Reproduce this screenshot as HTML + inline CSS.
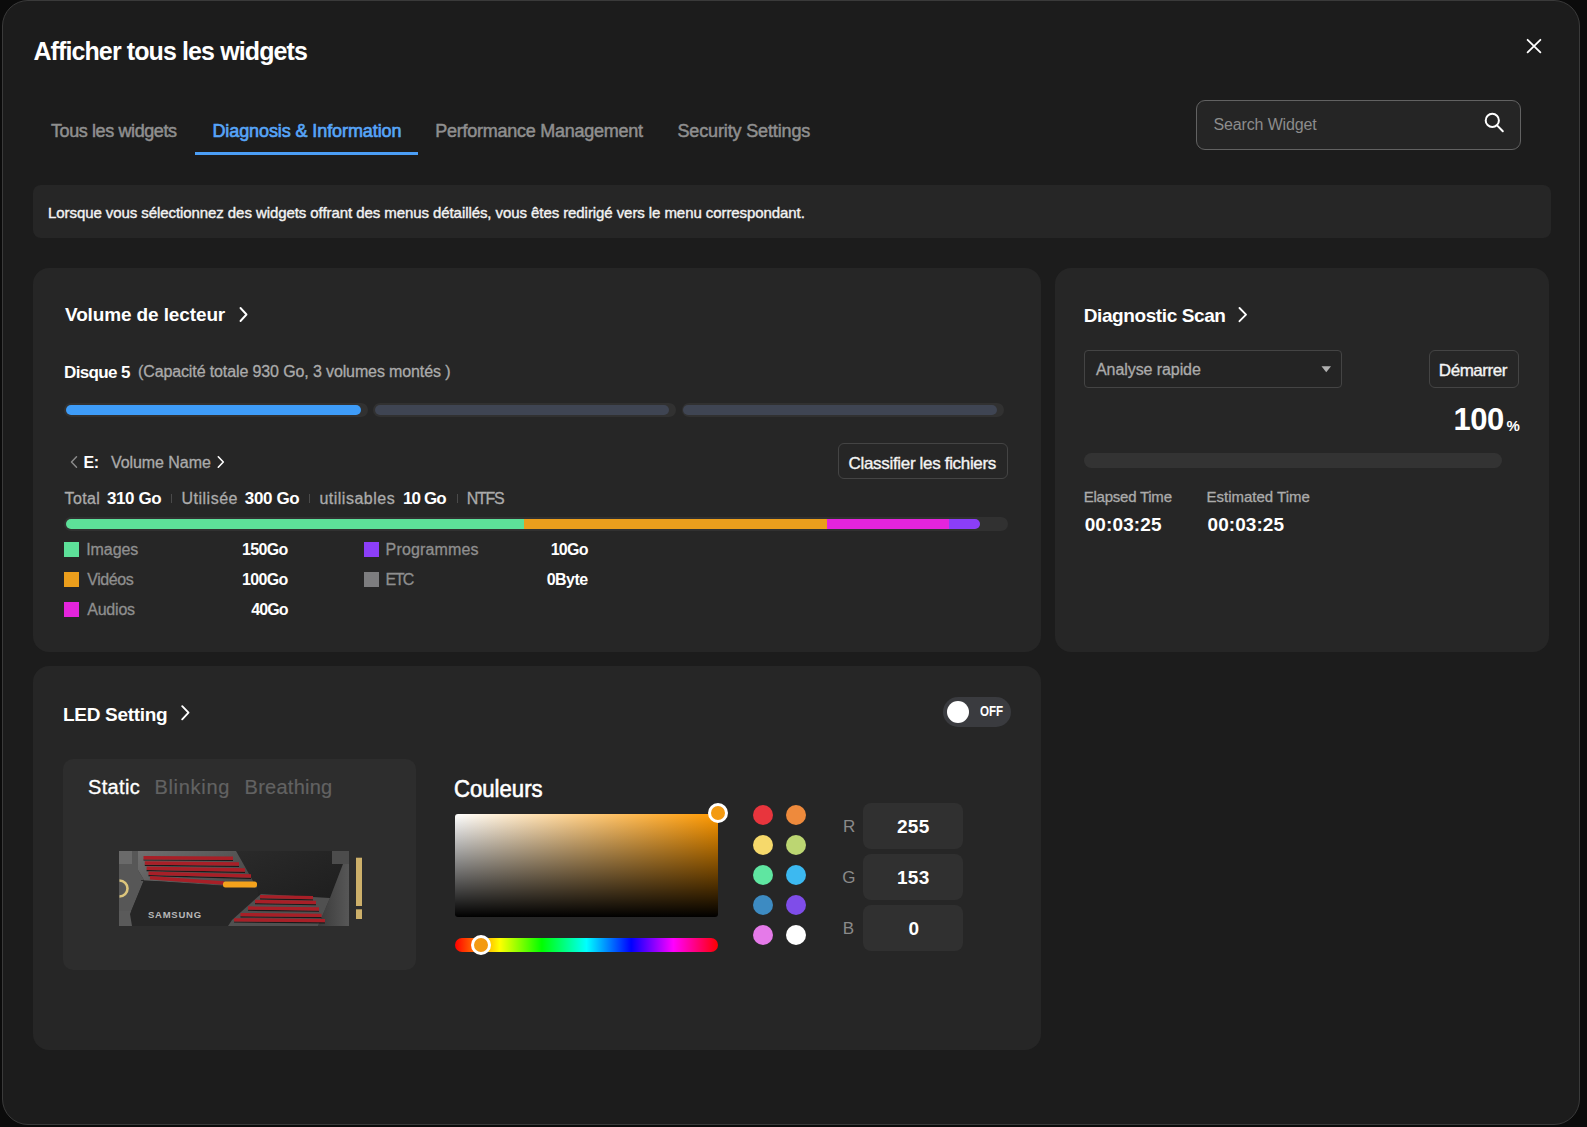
<!DOCTYPE html>
<html><head><meta charset="utf-8">
<style>
html,body{margin:0;padding:0;}
body{width:1587px;height:1127px;background:#0b0b0b;position:relative;overflow:hidden;font-family:"Liberation Sans",sans-serif;}
.a{position:absolute;box-sizing:border-box;}
.t{position:absolute;white-space:nowrap;font-family:"Liberation Sans",sans-serif;}
.modal{left:2px;top:0;width:1578px;height:1125px;background:#1c1c1c;border:1px solid #3a3a3a;border-radius:26px;}
.card{background:#262626;border-radius:16px;}
.trk{background:#313131;border-radius:7px;}
.fill{border-radius:5px;}
.sep{width:1px;background:#4a4a4a;}
.sq{width:15px;height:15px;}
.sw{width:20px;height:20px;border-radius:50%;}
.rgb{left:863px;width:100px;height:46px;background:#303030;border-radius:8px;}
svg{position:absolute;overflow:visible;}
</style></head><body>
<div class="a modal"></div>

<!-- close X -->
<svg style="left:0;top:0" width="1587" height="1127">
  <path d="M1527.6 39.8 L1540.4 52.4 M1540.4 39.8 L1527.6 52.4" stroke="#ffffff" stroke-width="1.8" stroke-linecap="round" fill="none"/>
</svg>

<!-- tab underline -->
<div class="a" style="left:195px;top:152px;width:223px;height:3px;background:#4b9ef6"></div>

<!-- search box -->
<div class="a" style="left:1196px;top:100px;width:325px;height:50px;border:1px solid #626262;border-radius:9px;background:#252525"></div>
<svg style="left:0;top:0" width="1587" height="1127">
  <circle cx="1492.3" cy="120.4" r="6.6" stroke="#fff" stroke-width="2" fill="none"/>
  <path d="M1497.3 125.6 L1502.8 131.2" stroke="#fff" stroke-width="2" stroke-linecap="round"/>
</svg>

<!-- banner -->
<div class="a" style="left:33px;top:185px;width:1518px;height:53px;background:#262626;border-radius:8px"></div>

<!-- cards -->
<div class="a card" style="left:33px;top:268px;width:1008px;height:384px"></div>
<div class="a card" style="left:1055px;top:268px;width:494px;height:384px"></div>
<div class="a card" style="left:33px;top:666px;width:1008px;height:384px"></div>

<!-- chevrons -->
<svg style="left:0;top:0" width="1587" height="1127">
  <path d="M240.5 308 L246.5 314.5 L240.5 321" stroke="#fff" stroke-width="1.9" fill="none" stroke-linecap="round" stroke-linejoin="round"/>
  <path d="M1239.5 308 L1246 314.6 L1239.5 321.2" stroke="#fff" stroke-width="1.9" fill="none" stroke-linecap="round" stroke-linejoin="round"/>
  <path d="M182.2 706.2 L188.5 712.7 L182.2 719.3" stroke="#fff" stroke-width="1.9" fill="none" stroke-linecap="round" stroke-linejoin="round"/>
  <path d="M76.5 456.8 L71.5 462 L76.5 467.2" stroke="#8a8a8a" stroke-width="1.5" fill="none" stroke-linecap="round" stroke-linejoin="round"/>
  <path d="M218.3 456.8 L223.3 462 L218.3 467.2" stroke="#fff" stroke-width="1.6" fill="none" stroke-linecap="round" stroke-linejoin="round"/>
</svg>

<!-- volume segments -->
<div class="a trk" style="left:64px;top:403px;width:304px;height:14px"></div>
<div class="a trk" style="left:373px;top:403px;width:303px;height:14px"></div>
<div class="a trk" style="left:682px;top:403px;width:322px;height:14px"></div>
<div class="a fill" style="left:66px;top:405px;width:295px;height:10px;background:#3e9cf8"></div>
<div class="a fill" style="left:375px;top:405px;width:294px;height:10px;background:#3f4553"></div>
<div class="a fill" style="left:683px;top:405px;width:314px;height:10px;background:#3f4553"></div>

<!-- separators -->
<div class="a sep" style="left:171px;top:494px;height:9px"></div>
<div class="a sep" style="left:309px;top:494px;height:9px"></div>
<div class="a sep" style="left:457px;top:494px;height:9px"></div>

<!-- classifier button -->
<div class="a" style="left:838px;top:443px;width:170px;height:36px;border:1px solid #444;border-radius:6px"></div>

<!-- usage bar -->
<div class="a trk" style="left:64px;top:517px;width:944px;height:14px"></div>
<div class="a" style="left:66px;top:519px;width:914px;height:10px;border-radius:5px;overflow:hidden;background:linear-gradient(to right,#5de099 0,#5de099 457.6px,#eb9e1c 457.6px,#eb9e1c 761.3px,#e424dc 761.3px,#e424dc 883px,#8b3ef8 883px)"></div>

<!-- legend squares -->
<div class="a sq" style="left:64px;top:542px;background:#5de099"></div>
<div class="a sq" style="left:64px;top:572px;background:#eb9e1c"></div>
<div class="a sq" style="left:64px;top:602px;background:#e424dc"></div>
<div class="a sq" style="left:364px;top:542px;background:#8b3ef8"></div>
<div class="a sq" style="left:364px;top:572px;background:#7d7d7f"></div>

<!-- diagnostic -->
<div class="a" style="left:1084px;top:350px;width:258px;height:38px;border:1px solid #444;border-radius:4px;background:#242424"></div>
<svg style="left:0;top:0" width="1587" height="1127">
  <path d="M1321.5 366.3 L1331 366.3 L1326.25 372.3 Z" fill="#b0b0b0"/>
</svg>
<div class="a" style="left:1429px;top:350px;width:90px;height:38px;border:1px solid #444;border-radius:6px"></div>
<div class="a" style="left:1084px;top:453px;width:418px;height:15px;border-radius:7.5px;background:#333333"></div>

<!-- toggle -->
<div class="a" style="left:943px;top:697px;width:68px;height:30px;border-radius:15px;background:#3a3b3f"></div>
<div class="a" style="left:947px;top:700.7px;width:22.2px;height:22.2px;border-radius:50%;background:#fff"></div>

<!-- led panel -->
<div class="a" style="left:63px;top:759px;width:353px;height:211px;border-radius:10px;background:#2d2d2d"></div>

<!-- SSD -->
<svg style="left:118px;top:850px" width="244" height="77" viewBox="0 0 244 77">
  <defs>
    <linearGradient id="silv" x1="0" y1="0" x2="1" y2="0.3">
      <stop offset="0" stop-color="#707070"/><stop offset="0.45" stop-color="#555555"/><stop offset="1" stop-color="#3a3a3a"/>
    </linearGradient>
    <linearGradient id="silv2" x1="0" y1="0" x2="1" y2="0">
      <stop offset="0" stop-color="#3a3a3a"/><stop offset="1" stop-color="#575757"/>
    </linearGradient>
    <linearGradient id="dk" x1="0" y1="0" x2="1" y2="1">
      <stop offset="0" stop-color="#2a2a2a"/><stop offset="1" stop-color="#1e1e1e"/>
    </linearGradient>
  </defs>
  <rect x="1" y="1" width="230" height="75" fill="#2a2a2a"/>
  <!-- left end cap -->
  <polygon points="1,1 20,1 28,1 20,20 26,30 12,64 1,64" fill="#575757"/>
  <rect x="1" y="1" width="13" height="13" fill="#6a6a6a"/>
  <rect x="1" y="61" width="13" height="15" fill="#5a5a5a"/>
  <!-- upper silver panel -->
  <polygon points="20,1 231,1 231,2 140,2 139,38 22,30 26,30 20,20" fill="url(#silv)"/>
  <!-- top right dark -->
  <polygon points="118,1 214,1 225,14 212,48 140,48 139,38" fill="url(#dk)"/>
  <!-- lower dark band -->
  <polygon points="22,30 139,38 140,48 212,48 200,76 14,76 12,64 26,30" fill="#262626"/>
  <!-- right end cap / lower right silver -->
  <polygon points="214,1 231,1 231,76 200,76 212,48 225,14" fill="url(#silv2)"/>
  <polygon points="143,44 212,48 200,76 110,76 114,70" fill="#505050"/>
  <rect x="214" y="1" width="17" height="13" fill="#4c4c4c"/>
  <!-- upper stripes -->
  <g stroke="#1a1a1a" stroke-width="1.2" transform="translate(0,2.3)">
    <path d="M25.5 7.7 L115 8.2"/>
    <path d="M26.8 13 L121 14"/>
    <path d="M28.6 18.3 L127 20"/>
    <path d="M30.5 23.3 L133 26"/>
  </g>
  <g stroke="#a81f27" stroke-width="3.4">
    <path d="M25.5 7.7 L115 8.2"/>
    <path d="M26.8 13 L121 14"/>
    <path d="M28.6 18.3 L127 20"/>
    <path d="M30.5 23.3 L133 26"/>
    <path d="M32 27.8 L106 33"/>
  </g>
  <rect x="105" y="31.5" width="34" height="6" rx="2.5" fill="#f4a21c"/>
  <!-- lower stripes -->
  <g stroke="#1a1a1a" stroke-width="1.2" transform="translate(0,2.2)">
    <path d="M142 46.6 L195 47.6"/>
    <path d="M137 51.5 L198 52.5"/>
    <path d="M130 58 L201 59"/>
    <path d="M122.5 64.6 L203.5 65.4"/>
    <path d="M116 69.8 L207 70.6"/>
  </g>
  <g stroke="#a81f27" stroke-width="3.3">
    <path d="M142 46.6 L195 47.6"/>
    <path d="M137 51.5 L198 52.5"/>
    <path d="M130 58 L201 59"/>
    <path d="M122.5 64.6 L203.5 65.4"/>
    <path d="M116 69.8 L207 70.6"/>
  </g>
  <text x="30" y="68" font-family="Liberation Sans" font-weight="700" font-size="9.5" fill="#b8b8b8" letter-spacing="0.75">SAMSUNG</text>
  <rect x="238" y="7.7" width="6" height="48.3" fill="#cdb06a"/>
  <rect x="238" y="59.3" width="6" height="9.7" fill="#cdb06a"/>
  <path d="M1.5 30.5 A8 8 0 0 1 1.5 46.5" stroke="#dcc57c" stroke-width="2.6" fill="none"/>
</svg>

<!-- color picker -->
<div class="a" style="left:455px;top:813.5px;width:263px;height:103px;border-radius:3px;background:linear-gradient(to bottom,rgba(0,0,0,0),#000),linear-gradient(to right,#fff,#ff9900)"></div>
<div class="a" style="left:708px;top:803px;width:20px;height:20px;border-radius:50%;background:#f39a12;border:3px solid #fff"></div>
<div class="a" style="left:455px;top:937.7px;width:263px;height:14.5px;border-radius:7px;background:linear-gradient(to right,#ff0000 0%,#ffff00 17%,#00ff00 33%,#00ffff 50%,#0000ff 67%,#ff00ff 83%,#ff0000 100%)"></div>
<div class="a" style="left:471px;top:934.5px;width:20px;height:20px;border-radius:50%;background:#f39a12;border:3px solid #fff"></div>

<!-- swatches -->
<div class="a sw" style="left:752.8px;top:804.7px;background:#e8353d"></div>
<div class="a sw" style="left:786px;top:804.7px;background:#ee8a3c"></div>
<div class="a sw" style="left:752.8px;top:834.8px;background:#f6d96b"></div>
<div class="a sw" style="left:786px;top:834.8px;background:#bcd672"></div>
<div class="a sw" style="left:752.8px;top:865.2px;background:#5fe6a1"></div>
<div class="a sw" style="left:786px;top:865.2px;background:#3cb9f1"></div>
<div class="a sw" style="left:752.8px;top:894.5px;background:#3d8bc2"></div>
<div class="a sw" style="left:786px;top:894.5px;background:#7f4de9"></div>
<div class="a sw" style="left:752.8px;top:924.6px;background:#e57ae9"></div>
<div class="a sw" style="left:786px;top:924.6px;background:#ffffff"></div>

<!-- rgb boxes -->
<div class="a rgb" style="top:803px"></div>
<div class="a rgb" style="top:854px"></div>
<div class="a rgb" style="top:905px"></div>

<span class='t' id='title' style='left:33.40px;top:39.34px;font-size:25px;font-weight:700;line-height:25px;color:#ffffff;letter-spacing:-0.892px'>Afficher tous les widgets</span>
<span class='t' id='tab1' style='left:51.00px;top:121.96px;font-size:18px;font-weight:400;line-height:18px;color:#8f8f8f;letter-spacing:-0.400px;-webkit-text-stroke:0.5px #8f8f8f'>Tous les widgets</span>
<span class='t' id='tab2' style='left:212.40px;top:121.96px;font-size:18px;font-weight:400;line-height:18px;color:#57a5f8;letter-spacing:-0.091px;-webkit-text-stroke:0.65px #57a5f8'>Diagnosis &amp; Information</span>
<span class='t' id='tab3' style='left:435.30px;top:121.96px;font-size:18px;font-weight:400;line-height:18px;color:#8f8f8f;letter-spacing:-0.252px;-webkit-text-stroke:0.5px #8f8f8f'>Performance Management</span>
<span class='t' id='tab4' style='left:677.40px;top:121.96px;font-size:18px;font-weight:400;line-height:18px;color:#8f8f8f;letter-spacing:-0.131px;-webkit-text-stroke:0.5px #8f8f8f'>Security Settings</span>
<span class='t' id='search' style='left:1213.50px;top:116.96px;font-size:16px;font-weight:400;line-height:16px;color:#8c8c8c;letter-spacing:-0.142px'>Search Widget</span>
<span class='t' id='banner' style='left:48.00px;top:205.30px;font-size:15px;font-weight:400;line-height:15px;color:#f2f2f2;letter-spacing:-0.074px;-webkit-text-stroke:0.4px #f2f2f2'>Lorsque vous sélectionnez des widgets offrant des menus détaillés, vous êtes redirigé vers le menu correspondant.</span>
<span class='t' id='c1t' style='left:65.00px;top:305.22px;font-size:19px;font-weight:700;line-height:19px;color:#ffffff;letter-spacing:-0.125px'>Volume de lecteur</span>
<span class='t' id='disque' style='left:64.00px;top:363.61px;font-size:17px;font-weight:700;line-height:17px;color:#ffffff;letter-spacing:-0.629px'>Disque 5</span>
<span class='t' id='capa' style='left:138.00px;top:364.46px;font-size:16px;font-weight:400;line-height:16px;color:#ababab;letter-spacing:-0.119px;-webkit-text-stroke:0.3px #ababab'>(Capacité totale 930 Go, 3 volumes montés )</span>
<span class='t' id='E' style='left:83.40px;top:454.66px;font-size:16px;font-weight:700;line-height:16px;color:#ffffff;letter-spacing:-0.400px'>E:</span>
<span class='t' id='volname' style='left:111.00px;top:454.66px;font-size:16px;font-weight:400;line-height:16px;color:#ababab;letter-spacing:-0.070px;-webkit-text-stroke:0.3px #ababab'>Volume Name</span>
<span class='t' id='total' style='left:64.50px;top:490.96px;font-size:16px;font-weight:400;line-height:16px;color:#ababab;letter-spacing:0.375px;-webkit-text-stroke:0.3px #ababab'>Total</span>
<span class='t' id='v310' style='left:107.00px;top:490.11px;font-size:17px;font-weight:700;line-height:17px;color:#ffffff;letter-spacing:-0.400px'>310 Go</span>
<span class='t' id='util' style='left:181.50px;top:490.96px;font-size:16px;font-weight:400;line-height:16px;color:#ababab;letter-spacing:0.500px;-webkit-text-stroke:0.3px #ababab'>Utilisée</span>
<span class='t' id='v300' style='left:244.80px;top:490.11px;font-size:17px;font-weight:700;line-height:17px;color:#ffffff;letter-spacing:-0.360px'>300 Go</span>
<span class='t' id='utilb' style='left:319.40px;top:490.96px;font-size:16px;font-weight:400;line-height:16px;color:#ababab;letter-spacing:0.500px;-webkit-text-stroke:0.3px #ababab'>utilisables</span>
<span class='t' id='v10' style='left:402.90px;top:490.11px;font-size:17px;font-weight:700;line-height:17px;color:#ffffff;letter-spacing:-0.875px'>10 Go</span>
<span class='t' id='ntfs' style='left:466.80px;top:490.96px;font-size:16px;font-weight:400;line-height:16px;color:#ababab;letter-spacing:-1.267px;-webkit-text-stroke:0.3px #ababab'>NTFS</span>
<span class='t' id='classif' style='left:848.60px;top:455.01px;font-size:17px;font-weight:400;line-height:17px;color:#f4f4f4;letter-spacing:-0.327px;-webkit-text-stroke:0.35px #f4f4f4'>Classifier les fichiers</span>
<span class='t' id='l_img' style='left:86.20px;top:541.96px;font-size:16px;font-weight:400;line-height:16px;color:#8f8f8f;letter-spacing:-0.060px;-webkit-text-stroke:0.3px #8f8f8f'>Images</span>
<span class='t' id='l_vid' style='left:87.20px;top:571.86px;font-size:16px;font-weight:400;line-height:16px;color:#8f8f8f;letter-spacing:-0.420px;-webkit-text-stroke:0.3px #8f8f8f'>Vidéos</span>
<span class='t' id='l_aud' style='left:87.20px;top:601.66px;font-size:16px;font-weight:400;line-height:16px;color:#8f8f8f;letter-spacing:-0.200px;-webkit-text-stroke:0.3px #8f8f8f'>Audios</span>
<span class='t' id='l_prog' style='left:385.60px;top:541.96px;font-size:16px;font-weight:400;line-height:16px;color:#8f8f8f;letter-spacing:0.156px;-webkit-text-stroke:0.3px #8f8f8f'>Programmes</span>
<span class='t' id='l_etc' style='left:385.60px;top:571.86px;font-size:16px;font-weight:400;line-height:16px;color:#8f8f8f;letter-spacing:-1.600px;-webkit-text-stroke:0.3px #8f8f8f'>ETC</span>
<span class='t' id='v150' style='left:242.00px;top:541.96px;font-size:16px;font-weight:700;line-height:16px;color:#ffffff;letter-spacing:-0.650px'>150Go</span>
<span class='t' id='v100' style='left:242.00px;top:571.86px;font-size:16px;font-weight:700;line-height:16px;color:#ffffff;letter-spacing:-0.650px'>100Go</span>
<span class='t' id='v40' style='left:251.30px;top:601.66px;font-size:16px;font-weight:700;line-height:16px;color:#ffffff;letter-spacing:-0.967px'>40Go</span>
<span class='t' id='v10b' style='left:550.70px;top:541.96px;font-size:16px;font-weight:700;line-height:16px;color:#ffffff;letter-spacing:-0.733px'>10Go</span>
<span class='t' id='v0b' style='left:546.70px;top:571.86px;font-size:16px;font-weight:700;line-height:16px;color:#ffffff;letter-spacing:-0.550px'>0Byte</span>
<span class='t' id='c2t' style='left:1083.70px;top:306.12px;font-size:19px;font-weight:700;line-height:19px;color:#ffffff;letter-spacing:-0.400px'>Diagnostic Scan</span>
<span class='t' id='analyse' style='left:1096.00px;top:361.96px;font-size:16px;font-weight:400;line-height:16px;color:#ababab;letter-spacing:-0.077px;-webkit-text-stroke:0.3px #ababab'>Analyse rapide</span>
<span class='t' id='demarrer' style='left:1438.80px;top:362.11px;font-size:17px;font-weight:400;line-height:17px;color:#f4f4f4;letter-spacing:-0.443px;-webkit-text-stroke:0.35px #f4f4f4'>Démarrer</span>
<span class='t' id='p100' style='left:1453.40px;top:403.96px;font-size:31px;font-weight:700;line-height:31px;color:#ffffff;letter-spacing:-0.450px'>100</span>
<span class='t' id='pct' style='left:1506.40px;top:417.50px;font-size:15px;font-weight:700;line-height:15px;color:#ffffff'>%</span>
<span class='t' id='elapsed' style='left:1083.70px;top:489.40px;font-size:15px;font-weight:400;line-height:15px;color:#ababab;letter-spacing:-0.236px;-webkit-text-stroke:0.3px #ababab'>Elapsed Time</span>
<span class='t' id='estim' style='left:1206.50px;top:489.40px;font-size:15px;font-weight:400;line-height:15px;color:#ababab;-webkit-text-stroke:0.3px #ababab'>Estimated Time</span>
<span class='t' id='t1' style='left:1084.70px;top:515.32px;font-size:19px;font-weight:700;line-height:19px;color:#ffffff;letter-spacing:0.114px'>00:03:25</span>
<span class='t' id='t2' style='left:1207.50px;top:515.32px;font-size:19px;font-weight:700;line-height:19px;color:#ffffff;letter-spacing:0.071px'>00:03:25</span>
<span class='t' id='c3t' style='left:63.00px;top:704.92px;font-size:19px;font-weight:700;line-height:19px;color:#ffffff;letter-spacing:-0.300px'>LED Setting</span>
<span class='t' id='off' style='left:980.10px;top:704.45px;font-size:14px;font-weight:700;line-height:14px;color:#ffffff;transform:scaleX(0.8286);transform-origin:0 0'>OFF</span>
<span class='t' id='static' style='left:88.00px;top:777.37px;font-size:20px;font-weight:400;line-height:20px;color:#ffffff;letter-spacing:0.360px;-webkit-text-stroke:0.35px #ffffff'>Static</span>
<span class='t' id='blink' style='left:154.40px;top:777.37px;font-size:20px;font-weight:400;line-height:20px;color:#626262;letter-spacing:0.714px;-webkit-text-stroke:0.2px #626262'>Blinking</span>
<span class='t' id='breath' style='left:244.60px;top:777.37px;font-size:20px;font-weight:400;line-height:20px;color:#626262;letter-spacing:0.250px;-webkit-text-stroke:0.2px #626262'>Breathing</span>
<span class='t' id='couleurs' style='left:454.44px;top:777.73px;font-size:23px;font-weight:400;line-height:23px;color:#ffffff;transform:scaleX(0.9626);transform-origin:0 0;-webkit-text-stroke:0.6px #ffffff'>Couleurs</span>
<span class='t' id='R' style='left:842.90px;top:818.01px;font-size:17px;font-weight:400;line-height:17px;color:#8a8a8a'>R</span>
<span class='t' id='G' style='left:842.20px;top:868.91px;font-size:17px;font-weight:400;line-height:17px;color:#8a8a8a'>G</span>
<span class='t' id='B' style='left:842.70px;top:919.71px;font-size:17px;font-weight:400;line-height:17px;color:#8a8a8a'>B</span>
<span class='t' id='r255' style='left:896.90px;top:817.42px;font-size:19px;font-weight:700;line-height:19px;color:#ffffff;letter-spacing:0.350px'>255</span>
<span class='t' id='g153' style='left:897.00px;top:868.32px;font-size:19px;font-weight:700;line-height:19px;color:#ffffff;letter-spacing:0.300px'>153</span>
<span class='t' id='b0' style='left:908.40px;top:919.12px;font-size:19px;font-weight:700;line-height:19px;color:#ffffff'>0</span>
</body></html>
